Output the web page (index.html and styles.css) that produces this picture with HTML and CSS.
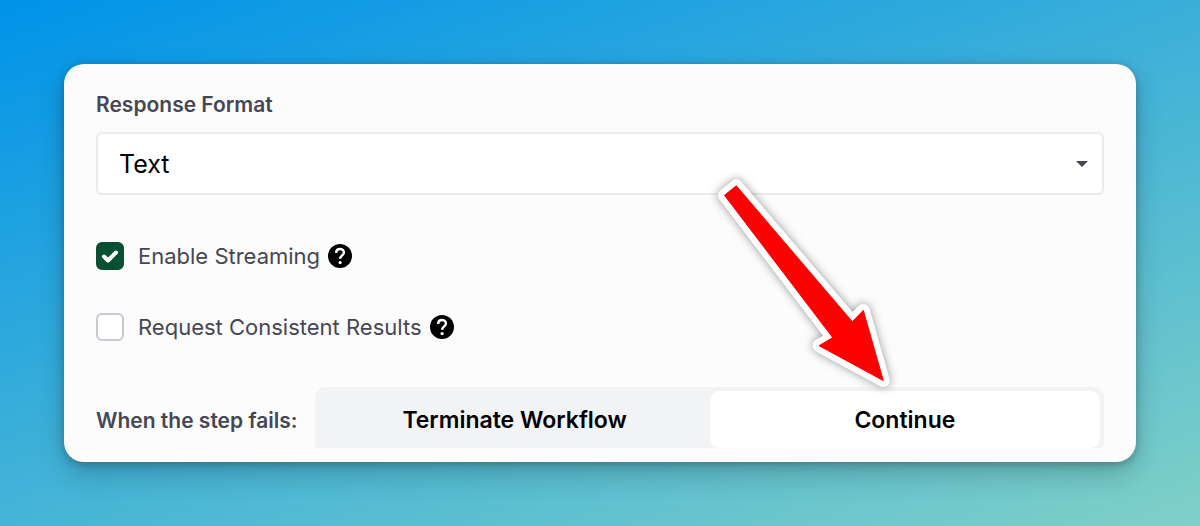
FILE: index.html
```html
<!DOCTYPE html>
<html lang="en">
<head>
  <meta charset="utf-8">
  <meta name="viewport" content="width=device-width, initial-scale=1">
  <title>Response Format</title>
  <link rel="stylesheet" href="styles.css">
</head>
<body>
  <form class="card">
    <label class="label" for="format">Response Format</label>
    <div class="select-wrap">
      <select class="select" id="format">
        <option>Text</option>
      </select>
      <svg class="caret" viewBox="0 0 12 6" aria-hidden="true"><path d="M0 0h12L6 6z"/></svg>
    </div>

    <div class="check-row">
      <input class="check" type="checkbox" id="streaming" checked>
      <label class="check-label" for="streaming">Enable Streaming</label>
      <svg class="help" viewBox="0 0 24 24" role="img" aria-label="Help">
        <circle cx="12" cy="12" r="12"/>
        <path class="help-mark" d="M8.200 8.900C8.200 6.500 9.900 5 12 5s3.900 1.400 3.900 3.500c0 2.900-3.700 3-3.700 6.200"/>
        <circle class="help-dot" cx="12.100" cy="18.600" r="1.600"/>
      </svg>
    </div>

    <div class="check-row">
      <input class="check" type="checkbox" id="consistent">
      <label class="check-label" for="consistent">Request Consistent Results</label>
      <svg class="help" viewBox="0 0 24 24" role="img" aria-label="Help">
        <circle cx="12" cy="12" r="12"/>
        <path class="help-mark" d="M8.200 8.900C8.200 6.500 9.900 5 12 5s3.900 1.400 3.900 3.500c0 2.900-3.700 3-3.700 6.200"/>
        <circle class="help-dot" cx="12.100" cy="18.600" r="1.600"/>
      </svg>
    </div>

    <div class="fail-row">
      <span class="label" id="fail-label">When the step fails:</span>
      <div class="segments" role="group" aria-labelledby="fail-label">
        <button class="segment" type="button" aria-pressed="false">Terminate Workflow</button>
        <button class="segment segment-active" type="button" aria-pressed="true">Continue</button>
      </div>
    </div>

    <svg class="arrow" viewBox="0 0 190 230" aria-hidden="true">
      <path class="arrow-edge" d="M14.500 25.300 26.300 15.800 142.300 151.700 153.300 140.400 173.300 210.600 109.100 175.700 122.700 167.600z"/>
      <path class="arrow-fill" d="M14.500 25.300 26.300 15.800 142.300 151.700 153.300 140.400 173.300 210.600 109.100 175.700 122.700 167.600z"/>
    </svg>
  </form>
</body>
</html>
```
FILE: styles.css
```css
* {
  box-sizing: border-box;
}

body {
  min-height: 100vh;
  margin: 0;
  padding: 64px;
  font-family: Inter, "Liberation Sans", sans-serif;
  font-size: 21px;
  line-height: 28px;
  color: #464754;
  background: linear-gradient(160deg, #0093e9 0%, #80d0c7 100%);
}

.card {
  position: relative;
  display: flex;
  flex-direction: column;
  padding: 27px 32px 14px;
  border-radius: 20px;
  background: #fcfcfc;
  box-shadow: 0 12px 28px rgba(0, 0, 0, 0.2), 0 2px 8px rgba(0, 0, 0, 0.24);
}

.label {
  font-weight: 600;
}

.select-wrap {
  display: grid;
  align-items: center;
  margin: 13px 0 47px;
}

.select {
  grid-area: 1 / 1;
  width: 100%;
  height: 63px;
  padding: 0 21px;
  border: 2px solid #ebebeb;
  border-radius: 6px;
  appearance: none;
  background: #fff;
  color: #000;
  font: inherit;
  font-size: 25px;
}

.caret {
  grid-area: 1 / 1;
  justify-self: end;
  width: 12px;
  height: 6px;
  margin-right: 16px;
  fill: #464754;
  pointer-events: none;
}

.check-row {
  display: flex;
  align-items: center;
  margin-bottom: 43px;
}

.check {
  width: 28px;
  height: 28px;
  margin: 0 14px 0 0;
  border: 2px solid #c8c9d1;
  border-radius: 6px;
  appearance: none;
  background: #fff;
}

.check:checked {
  border-color: #065132;
  background: #065132 url("data:image/svg+xml,%3Csvg xmlns='http://www.w3.org/2000/svg' viewBox='0 0 24 24'%3E%3Cpath d='M6 12.500l4 4L18 8.500' fill='none' stroke='white' stroke-width='4' stroke-linecap='round' stroke-linejoin='round'/%3E%3C/svg%3E") center / 24px no-repeat;
}

.check-label {
  font-size: 22px;
}

.help {
  width: 24px;
  height: 24px;
  margin-left: 8px;
}

.help-mark {
  fill: none;
  stroke: #fff;
  stroke-width: 2.4;
}

.help-dot {
  fill: #fff;
}

.fail-row {
  display: flex;
  align-items: baseline;
  gap: 18px;
  margin-top: 3px;
}

.segments {
  display: grid;
  flex: 1;
  grid-template-columns: 1fr 1fr;
  padding: 4px 4px 0;
  border-radius: 10px 10px 4px 4px;
  background: #f2f3f5;
}

.segment {
  height: 57px;
  padding: 0;
  border: 0;
  border-radius: 10px;
  background: transparent;
  color: #000;
  font: inherit;
  font-size: 23px;
  font-weight: 600;
}

.segment-active {
  background: #fff;
}

.arrow {
  position: absolute;
  top: 106px;
  right: 236px;
  width: 190px;
  height: 230px;
  overflow: visible;
  filter: drop-shadow(0 0 5px rgba(0, 0, 0, 0.4));
  pointer-events: none;
}

.arrow-edge {
  fill: #fff;
  stroke: #fff;
  stroke-width: 13;
  stroke-linejoin: round;
}

.arrow-fill {
  fill: #f00;
  stroke: #f00;
  stroke-width: 1;
  stroke-linejoin: round;
}
```
